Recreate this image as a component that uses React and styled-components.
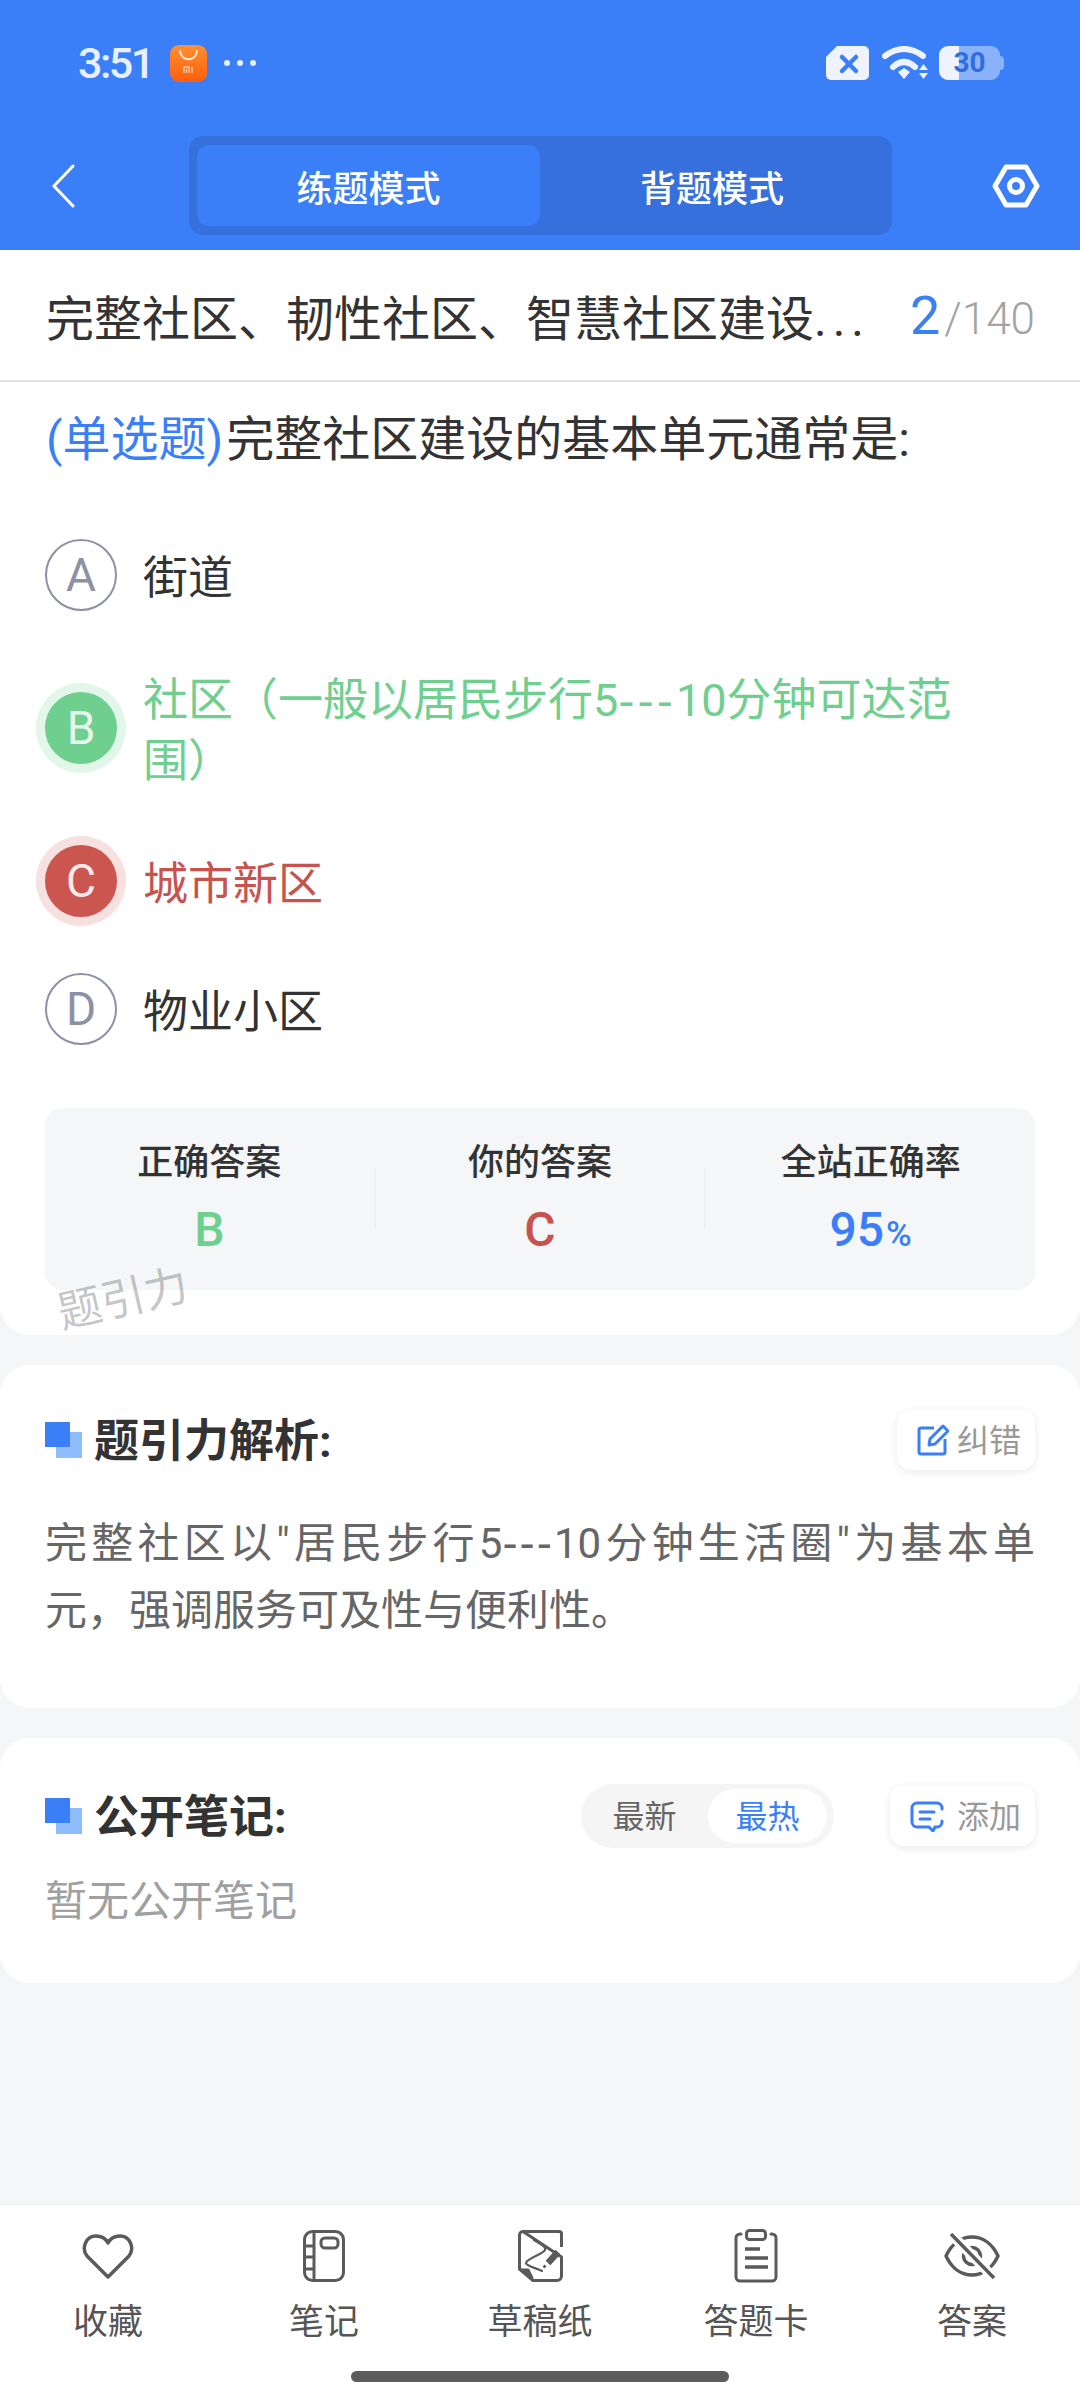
import React from "react";
import styled, { createGlobalStyle } from "styled-components";

const GlobalStyle = createGlobalStyle`
  html, body {
    margin: 0;
    padding: 0;
    background: #f5f6f8;
  }
  body {
    font-family: Roboto, "Noto Sans CJK SC", sans-serif;
    color: #333;
  }
`;

const Screen = styled.div`
  width: 1080px;
  height: 2400px;
  display: flex;
  flex-direction: column;
  overflow: hidden;
  background: #f5f6f8;
`;

const Header = styled.header`
  height: 250px;
  flex: none;
  background: #3b7ff8;
`;

const StatusBar = styled.div`
  height: 126px;
  box-sizing: border-box;
  padding: 0 76px 0 78px;
  display: flex;
  align-items: center;
  justify-content: space-between;
`;

const StatusLeft = styled.div`
  display: flex;
  align-items: center;
`;

const StatusRight = styled.div`
  display: flex;
  align-items: center;
`;

const Time = styled.span`
  width: 73px;
  margin-right: 19px;
  font-size: 43px;
  line-height: 44px;
  font-weight: 500;
  letter-spacing: -2.5px;
  color: #e8f0ff;
  white-space: nowrap;
`;

const AppBadge = styled.div`
  width: 37px;
  height: 37px;
  border-radius: 9px;
  background: linear-gradient(180deg, #ff8f33, #ff5e0c);
  display: flex;
`;

const MoreDots = styled.div`
  display: flex;
  gap: 7px;
  margin-left: 17px;

  i {
    width: 6px;
    height: 6px;
    border-radius: 50%;
    background: #e8f0ff;
  }
`;

const Battery = styled.div`
  position: relative;
  width: 61px;
  height: 34px;
  margin: 0 4px 0 11px;
  border-radius: 9px;
  background: linear-gradient(90deg, #eef3fe 20px, #8ab2fb 20px);
  color: #2f6ddc;
  font-size: 28px;
  line-height: 34px;
  font-weight: 700;
  text-align: center;

  &::after {
    content: "";
    position: absolute;
    top: 10px;
    right: -4px;
    width: 4px;
    height: 14px;
    border-radius: 0 4px 4px 0;
    background: #8ab2fb;
  }
`;

const NavRow = styled.div`
  margin-top: 10px;
  height: 99px;
  display: grid;
  grid-template-columns: 189px 703px 1fr;
  align-items: center;
`;

const BackButton = styled.div`
  padding-left: 51px;
  display: flex;
`;

const SettingsButton = styled.div`
  justify-self: end;
  padding-right: 40px;
  display: flex;
`;

const ModeSwitch = styled.div`
  height: 99px;
  box-sizing: border-box;
  padding: 9px 8px;
  display: grid;
  grid-template-columns: 343px 1fr;
  border-radius: 14px;
  background: #3570dc;
`;

const ModeTab = styled.div`
  display: flex;
  align-items: center;
  justify-content: center;
  border-radius: 12px;
  background: ${(p) => (p.$active ? "#3b7ff8" : "transparent")};
  color: #fff;
  font-size: 36px;
  font-weight: 500;
`;

const QuestionCard = styled.section`
  position: relative;
  flex: none;
  background: #fff;
  border-radius: 0 0 30px 30px;
  padding-bottom: 45px;
`;

const TitleRow = styled.div`
  height: 132px;
  box-sizing: border-box;
  padding: 0 45px 0 46px;
  display: flex;
  align-items: center;
  justify-content: space-between;
  border-bottom: 2px solid #e2e2e2;
`;

const TitleText = styled.div`
  font-size: 48px;
  color: #333;
  white-space: nowrap;

  span {
    letter-spacing: 6px;
  }
`;

const Counter = styled.div`
  display: flex;
  align-items: baseline;
  color: #a3a3a3;
  font-size: 44px;
  font-weight: 300;

  b {
    color: #3b7ff8;
    font-size: 54px;
    font-weight: 400;
    margin-right: 4px;
  }
`;

const QuestionText = styled.div`
  margin: 28px 45px 69px 46px;
  display: flex;
  gap: 3px;
  font-size: 48px;
  line-height: 60px;
  color: #333;
  white-space: nowrap;
`;

const QuestionType = styled.span`
  color: #3b7ff8;
`;

const OptionList = styled.div`
  padding: 0 45px;
  display: flex;
  flex-direction: column;
  gap: 56px;
`;

const optionColors = {
  plain: { text: "#333", letter: "#8e90a6", fill: "transparent", ring: "transparent", border: "#8e90a6" },
  right: { text: "#6fcf8e", letter: "#e6f8ec", fill: "#6fcf8e", ring: "#e2f6e9", border: "#6fcf8e" },
  wrong: { text: "#c8524e", letter: "#fbeaea", fill: "#cb5650", ring: "#f6e0e0", border: "#cb5650" },
};

const Option = styled.div`
  min-height: 72px;
  display: flex;
  align-items: center;
  gap: 26px;
  color: ${(p) => optionColors[p.$state].text};
`;

const OptionLetter = styled.div`
  width: 72px;
  height: 72px;
  flex: none;
  box-sizing: border-box;
  display: flex;
  align-items: center;
  justify-content: center;
  border-radius: 50%;
  border: 2px solid ${(p) => optionColors[p.$state].border};
  background: ${(p) => optionColors[p.$state].fill};
  box-shadow: 0 0 0 9px ${(p) => optionColors[p.$state].ring};
  color: ${(p) => optionColors[p.$state].letter};
  font-size: 46px;
`;

const OptionText = styled.div`
  width: 820px;
  padding-top: 3px;
  margin-bottom: -3px;
  font-size: 45px;
  line-height: 61px;
`;

const Dashes = styled.span`
  font-family: "DejaVu Sans", sans-serif;
  letter-spacing: ${(p) => p.$gap}px;
`;

const Stats = styled.div`
  margin: 63px 45px 0;
  height: 182px;
  display: grid;
  grid-template-columns: 1fr 2px 1fr 2px 1fr;
  border-radius: 18px;
  background: #f5f6f8;
`;

const StatCell = styled.div`
  padding-top: 33px;
  display: flex;
  flex-direction: column;
  align-items: center;
`;

const StatLabel = styled.div`
  font-size: 36px;
  line-height: 44px;
  font-weight: 500;
  color: #333;
`;

const StatValue = styled.div`
  margin-top: 21px;
  font-size: 48px;
  line-height: 48px;
  font-weight: 500;
  color: ${(p) => p.$color};

  small {
    margin-left: 2px;
    font-size: 35px;
  }
`;

const StatDivider = styled.div`
  height: 60px;
  margin-top: 60px;
  background: #eeeff1;
`;

const Watermark = styled.div`
  position: absolute;
  left: 57px;
  bottom: 11px;
  font-size: 44px;
  line-height: 50px;
  color: rgba(0, 0, 0, 0.24);
  transform: rotate(-13deg);
`;

const Card = styled.section`
  flex: none;
  margin-top: 30px;
  padding: ${(p) => p.$pad};
  border-radius: 30px;
  background: #fff;
`;

const CardHead = styled.div`
  display: flex;
  align-items: center;
  height: ${(p) => p.$height}px;
`;

const CardTitle = styled.h2`
  margin: 0 auto 0 12px;
  padding-bottom: 5px;
  font-size: 45px;
  font-weight: 700;
  color: #333;
`;

const Marker = styled.svg`
  width: 37px;
  height: 36px;
  flex: none;
`;

const ChipButton = styled.div`
  height: 60px;
  box-sizing: border-box;
  padding: 0 14px 0 ${(p) => p.$left}px;
  display: flex;
  align-items: center;
  gap: ${(p) => p.$gap}px;
  border-radius: 14px;
  background: #fff;
  box-shadow: 0 2px 10px rgba(0, 0, 0, 0.09);
  color: #999;
  font-size: 32px;

  span {
    padding-bottom: 5px;
  }
`;

const Analysis = styled.div`
  margin-top: 40px;
  font-size: 42px;
  line-height: 67px;
  color: #666;
`;

const JustifiedLine = styled.div`
  text-align: justify;
  text-align-last: justify;
`;

const SortToggle = styled.div`
  width: 253px;
  height: 64px;
  box-sizing: border-box;
  margin-right: 56px;
  padding: 5px 7px 5px 0;
  display: grid;
  grid-template-columns: 127px 1fr;
  border-radius: 32px;
  background: #f5f5f5;
  font-size: 32px;
`;

const SortOption = styled.div`
  display: flex;
  align-items: center;
  justify-content: center;
  padding-bottom: 5px;
  border-radius: 27px;
  background: ${(p) => (p.$active ? "#fff" : "transparent")};
  color: ${(p) => (p.$active ? "#3b7ff8" : "#666")};
`;

const EmptyNote = styled.div`
  margin-top: 24px;
  font-size: 42px;
  line-height: 60px;
  color: #a0a0a0;
`;

const BottomBar = styled.nav`
  margin-top: auto;
  height: 196px;
  flex: none;
  box-sizing: border-box;
  border-top: 1px solid #eeeeee;
  background: #fff;
  padding-top: 23px;
`;

const BarItems = styled.div`
  display: grid;
  grid-template-columns: repeat(5, 1fr);
`;

const BarItem = styled.div`
  display: flex;
  flex-direction: column;
  align-items: center;
  gap: 17px;
`;

const BarIcon = styled.div`
  height: 56px;
  display: flex;
  align-items: center;
  justify-content: center;
`;

const BarLabel = styled.div`
  font-size: 35px;
  line-height: 44px;
  color: #555;
`;

const HomeIndicator = styled.div`
  width: 378px;
  height: 11px;
  margin: 26px auto 0;
  border-radius: 6px;
  background: #5c5c5c;
`;

const BLUE = "#3b7ff8";
const GREY = "#5a5a5a";

const MarkerIcon = () => (
  <Marker viewBox="0 0 37 36">
    <rect x="11" y="10" width="26" height="26" fill="#8fbcfb" />
    <rect width="25" height="25" fill={BLUE} />
  </Marker>
);

const EditIcon = () => (
  <svg width="32" height="32" viewBox="0 0 32 32" fill="none" stroke={BLUE} strokeWidth="3">
    <path d="M17 4H4a2 2 0 0 0-2 2v22a2 2 0 0 0 2 2h22a2 2 0 0 0 2-2V15" />
    <path d="M12 21l1-6L26 2l5 5-13 13z" strokeLinejoin="round" />
  </svg>
);

const CommentIcon = () => (
  <svg width="34" height="31" viewBox="0 0 34 31" fill="none" stroke={BLUE} strokeWidth="3" strokeLinecap="round">
    <path d="M32 8V7a5 5 0 0 0-5-5H7a5 5 0 0 0-5 5v14a5 5 0 0 0 5 5h12l4 4 2-4h2a5 5 0 0 0 5-5v-1" />
    <path d="M10 11h14M10 18h10" />
  </svg>
);

const tabs = [
  {
    label: "收藏",
    icon: (
      <svg width="52" height="45" viewBox="0 0 52 45" fill="none" stroke={GREY} strokeWidth="3.5" strokeLinejoin="round">
        <path d="M26 43L5 22C-1 14 4 2 14 2c6 0 10 3 12 7 2-4 6-7 12-7 10 0 15 12 9 20z" />
      </svg>
    ),
  },
  {
    label: "笔记",
    icon: (
      <svg width="42" height="52" viewBox="0 0 42 52" fill="none" stroke={GREY} strokeWidth="3">
        <rect x="1.5" y="1.5" width="39" height="49" rx="8" />
        <path d="M11 2v48M2 16h9M2 27h9M2 39h9" />
        <rect x="18" y="8" width="17" height="10" rx="4" />
      </svg>
    ),
  },
  {
    label: "草稿纸",
    icon: (
      <svg width="45" height="52" viewBox="0 0 45 52" fill="none" stroke={GREY} strokeWidth="3" strokeLinejoin="round">
        <path d="M5 1.500h36a2.500 2.500 0 0 1 2.500 2.500v13M43.500 27v19a4.500 4.500 0 0 1-4.500 4.500H15L1.500 39V5A3.500 3.500 0 0 1 5 1.500z" />
        <path d="M3 40h7l4 8z" fill={GREY} />
        <path d="M16 10C20 13 29 16 27 20C25 24 8 29 8 33C8 36 18 38 24 41" strokeWidth="2.200" strokeLinecap="round" />
        <path d="M30 33l10-11" strokeWidth="6.500" />
        <path d="M25.500 37.500l2-2" strokeWidth="2.500" />
      </svg>
    ),
  },
  {
    label: "答题卡",
    icon: (
      <svg width="44" height="54" viewBox="0 0 44 54" fill="none" stroke={GREY} strokeWidth="3" strokeLinecap="round">
        <path d="M7 5H6a4 4 0 0 0-4 4v39a4 4 0 0 0 4 4h32a4 4 0 0 0 4-4V9a4 4 0 0 0-4-4h-1" />
        <rect x="12.500" y="1.500" width="19" height="9" rx="3" />
        <path d="M11 20h15M11 29h23M11 38h23" strokeLinecap="butt" strokeWidth="3.500" />
      </svg>
    ),
  },
  {
    label: "答案",
    icon: (
      <svg width="56" height="46" viewBox="0 0 56 46" fill="none" stroke={GREY} strokeWidth="3.500">
        <path d="M2 23C8 10 18 4 28 4s20 6 26 19c-6 13-16 19-26 19S8 36 2 23z" strokeLinejoin="round" />
        <circle cx="28" cy="23" r="8.500" />
        <path d="M7 1l43 44" stroke="#fff" strokeWidth="10" />
        <path d="M7 1l43 44" />
      </svg>
    ),
  },
];

const App = () => {
  return (
    <Screen>
      <GlobalStyle />
      <Header>
        <StatusBar>
          <StatusLeft>
            <Time>3:51</Time>
            <AppBadge>
              <svg width="37" height="37" viewBox="0 0 37 37" fill="none" stroke="#ffe9c9">
                <path d="M10 6c1 11 16 11 17 0" strokeWidth="2" strokeLinecap="round" />
                <path d="M14 28v-6h5v6M16.500 24v4M22 22v6" strokeWidth="1.400" opacity="0.800" />
              </svg>
            </AppBadge>
            <MoreDots>
              <i />
              <i />
              <i />
            </MoreDots>
          </StatusLeft>
          <StatusRight>
            <svg width="43" height="34" viewBox="0 0 43 34">
              <path
                d="M11 0h27a5 5 0 0 1 5 5v24a5 5 0 0 1-5 5H5a5 5 0 0 1-5-5V11z"
                fill="#eef3fe"
              />
              <path d="M16 11l14 14M30 11L16 25" stroke={BLUE} strokeWidth="4.500" strokeLinecap="round" />
            </svg>
            <svg width="46" height="34" viewBox="0 0 46 34" fill="none" style={{ marginLeft: 13 }}>
              <path d="M3 10Q22-4 41 10" stroke="#eef3fe" strokeWidth="6" strokeLinecap="round" />
              <path d="M11 21Q22 11 33 21" stroke="#eef3fe" strokeWidth="6" strokeLinecap="round" />
              <path d="M16 26l6-4 6 4-6 7zM37 24l4.500-6 4.500 6zM37 27h9l-4.500 6z" fill="#eef3fe" />
            </svg>
            <Battery>30</Battery>
          </StatusRight>
        </StatusBar>
        <NavRow>
          <BackButton>
            <svg width="24" height="44" viewBox="0 0 24 44" fill="none" stroke="#fff" strokeWidth="3" strokeLinecap="round">
              <path d="M22 2L3 22l19 20" />
            </svg>
          </BackButton>
          <ModeSwitch>
            <ModeTab $active>练题模式</ModeTab>
            <ModeTab>背题模式</ModeTab>
          </ModeSwitch>
          <SettingsButton>
            <svg width="48" height="44" viewBox="0 0 48 44" fill="none" stroke="#fff" strokeWidth="5" strokeLinejoin="round">
              <path d="M14 3h20l11 19-11 19H14L3 22z" />
              <circle cx="24" cy="22" r="6.500" />
            </svg>
          </SettingsButton>
        </NavRow>
      </Header>

      <QuestionCard>
        <TitleRow>
          <TitleText>
            完整社区、韧性社区、智慧社区建设<span>...</span>
          </TitleText>
          <Counter>
            <b>2</b>/140
          </Counter>
        </TitleRow>
        <QuestionText>
          <QuestionType>(单选题)</QuestionType>
          <span>完整社区建设的基本单元通常是:</span>
        </QuestionText>
        <OptionList>
          <Option $state="plain">
            <OptionLetter $state="plain">A</OptionLetter>
            <OptionText>街道</OptionText>
          </Option>
          <Option $state="right">
            <OptionLetter $state="right">B</OptionLetter>
            <OptionText>
              <div>
                社区（一般以居民步行5<Dashes $gap={3}>---</Dashes>10分钟可达范
              </div>
              <div>围）</div>
            </OptionText>
          </Option>
          <Option $state="wrong">
            <OptionLetter $state="wrong">C</OptionLetter>
            <OptionText>城市新区</OptionText>
          </Option>
          <Option $state="plain">
            <OptionLetter $state="plain">D</OptionLetter>
            <OptionText>物业小区</OptionText>
          </Option>
        </OptionList>
        <Stats>
          <StatCell>
            <StatLabel>正确答案</StatLabel>
            <StatValue $color="#6fcf8e">B</StatValue>
          </StatCell>
          <StatDivider />
          <StatCell>
            <StatLabel>你的答案</StatLabel>
            <StatValue $color="#c8524e">C</StatValue>
          </StatCell>
          <StatDivider />
          <StatCell>
            <StatLabel>全站正确率</StatLabel>
            <StatValue $color={BLUE}>
              95<small>%</small>
            </StatValue>
          </StatCell>
        </Stats>
        <Watermark>题引力</Watermark>
      </QuestionCard>

      <Card $pad="45px 45px 64px">
        <CardHead $height={60}>
          <MarkerIcon />
          <CardTitle>题引力解析:</CardTitle>
          <ChipButton $left={20} $gap={8}>
            <EditIcon />
            <span>纠错</span>
          </ChipButton>
        </CardHead>
        <Analysis>
          <JustifiedLine>
            完整社区以"居民步行5<Dashes $gap={2}>---</Dashes>10分钟生活圈"为基本单
          </JustifiedLine>
          <div>元，强调服务可及性与便利性。</div>
        </Analysis>
      </Card>

      <Card $pad="46px 45px 51px">
        <CardHead $height={64}>
          <MarkerIcon />
          <CardTitle>公开笔记:</CardTitle>
          <SortToggle>
            <SortOption>最新</SortOption>
            <SortOption $active>最热</SortOption>
          </SortToggle>
          <ChipButton $left={20} $gap={13}>
            <CommentIcon />
            <span>添加</span>
          </ChipButton>
        </CardHead>
        <EmptyNote>暂无公开笔记</EmptyNote>
      </Card>

      <BottomBar>
        <BarItems>
          {tabs.map((tab) => (
            <BarItem key={tab.label}>
              <BarIcon>{tab.icon}</BarIcon>
              <BarLabel>{tab.label}</BarLabel>
            </BarItem>
          ))}
        </BarItems>
        <HomeIndicator />
      </BottomBar>
    </Screen>
  );
};

export default App;
